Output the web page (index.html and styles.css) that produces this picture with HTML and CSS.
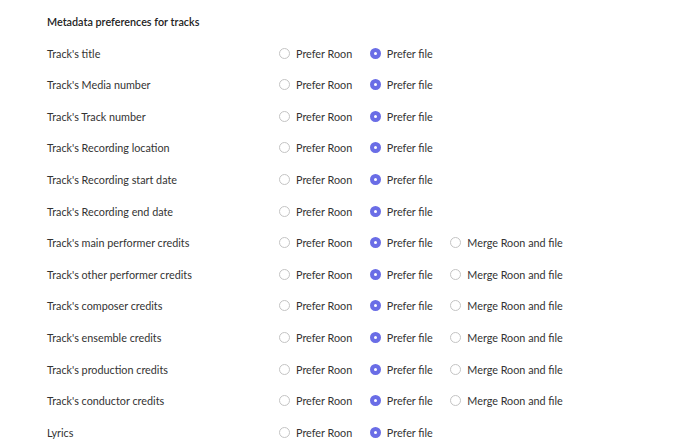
FILE: index.html
```html
<!DOCTYPE html>
<html>
<head>
<meta charset="utf-8">
<link rel="stylesheet" href="styles.css">
</head>
<body>
<div class="panel">
  <div class="title">Metadata preferences for tracks</div>
  <div class="row"><div class="label">Track's title</div><div class="opts"><span class="opt"><span class="radio"></span>Prefer Roon</span><span class="opt"><span class="radio on"></span>Prefer file</span></div></div>
  <div class="row"><div class="label">Track's Media number</div><div class="opts"><span class="opt"><span class="radio"></span>Prefer Roon</span><span class="opt"><span class="radio on"></span>Prefer file</span></div></div>
  <div class="row"><div class="label">Track's Track number</div><div class="opts"><span class="opt"><span class="radio"></span>Prefer Roon</span><span class="opt"><span class="radio on"></span>Prefer file</span></div></div>
  <div class="row"><div class="label">Track's Recording location</div><div class="opts"><span class="opt"><span class="radio"></span>Prefer Roon</span><span class="opt"><span class="radio on"></span>Prefer file</span></div></div>
  <div class="row"><div class="label">Track's Recording start date</div><div class="opts"><span class="opt"><span class="radio"></span>Prefer Roon</span><span class="opt"><span class="radio on"></span>Prefer file</span></div></div>
  <div class="row"><div class="label">Track's Recording end date</div><div class="opts"><span class="opt"><span class="radio"></span>Prefer Roon</span><span class="opt"><span class="radio on"></span>Prefer file</span></div></div>
  <div class="row"><div class="label">Track's main performer credits</div><div class="opts"><span class="opt"><span class="radio"></span>Prefer Roon</span><span class="opt"><span class="radio on"></span>Prefer file</span><span class="opt"><span class="radio"></span>Merge Roon and file</span></div></div>
  <div class="row"><div class="label">Track's other performer credits</div><div class="opts"><span class="opt"><span class="radio"></span>Prefer Roon</span><span class="opt"><span class="radio on"></span>Prefer file</span><span class="opt"><span class="radio"></span>Merge Roon and file</span></div></div>
  <div class="row"><div class="label">Track's composer credits</div><div class="opts"><span class="opt"><span class="radio"></span>Prefer Roon</span><span class="opt"><span class="radio on"></span>Prefer file</span><span class="opt"><span class="radio"></span>Merge Roon and file</span></div></div>
  <div class="row"><div class="label">Track's ensemble credits</div><div class="opts"><span class="opt"><span class="radio"></span>Prefer Roon</span><span class="opt"><span class="radio on"></span>Prefer file</span><span class="opt"><span class="radio"></span>Merge Roon and file</span></div></div>
  <div class="row"><div class="label">Track's production credits</div><div class="opts"><span class="opt"><span class="radio"></span>Prefer Roon</span><span class="opt"><span class="radio on"></span>Prefer file</span><span class="opt"><span class="radio"></span>Merge Roon and file</span></div></div>
  <div class="row"><div class="label">Track's conductor credits</div><div class="opts"><span class="opt"><span class="radio"></span>Prefer Roon</span><span class="opt"><span class="radio on"></span>Prefer file</span><span class="opt"><span class="radio"></span>Merge Roon and file</span></div></div>
  <div class="row"><div class="label">Lyrics</div><div class="opts"><span class="opt"><span class="radio"></span>Prefer Roon</span><span class="opt"><span class="radio on"></span>Prefer file</span></div></div>
</div>
</body>
</html>
```
FILE: styles.css
```css
html, body {
  margin: 0;
  padding: 0;
  background: #ffffff;
}
body {
  font-family: Lato, "Liberation Sans", sans-serif;
  font-size: 10.8px;
  color: #333333;
}
.panel {
  padding: 5.8px 0 0 47px;
}
.title {
  height: 31.6px;
  display: flex;
  align-items: center;
  font-weight: 600;
  color: #222222;
}
.row {
  height: 31.6px;
  display: flex;
  align-items: center;
}
.label {
  width: 232px;
}
.opts {
  display: flex;
  align-items: center;
  gap: 17.6px;
}
.opt {
  display: flex;
  align-items: center;
  gap: 6px;
}
.radio {
  box-sizing: border-box;
  width: 11px;
  height: 11px;
  border-radius: 50%;
  border: 1px solid #c4c4c4;
  background: #fff;
}
.radio.on {
  border: 4px solid #6a6de6;
  background: #ffffff;
}
```
